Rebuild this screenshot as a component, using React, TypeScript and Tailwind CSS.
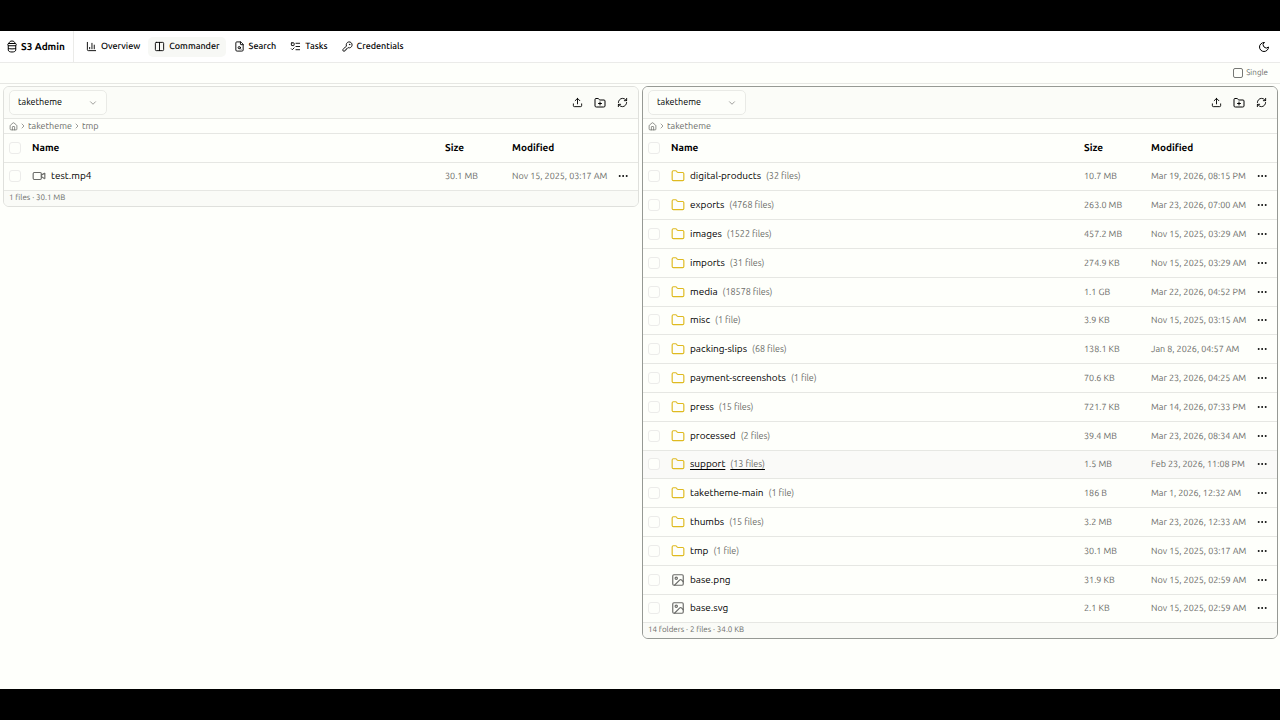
import React from "react";
import {
  ChartColumn, ChevronDown, ChevronRight, Columns2, Ellipsis, FileSearch, Folder, FolderPlus,
  House, Image, KeyRound, ListTodo, RefreshCw, Upload, Video,
} from "lucide-react";

type Kind = "folder" | "image" | "video";
type Entry = { name: string; kind: Kind; count?: string; size: string; modified: string; active?: boolean };

const left: Entry[] = [
  { name: "test.mp4", kind: "video", size: "30.1 MB", modified: "Nov 15, 2025, 03:17 AM" },
];

const right: Entry[] = [
  { name: "digital-products", kind: "folder", count: "(32 files)", size: "10.7 MB", modified: "Mar 19, 2026, 08:15 PM" },
  { name: "exports", kind: "folder", count: "(4768 files)", size: "263.0 MB", modified: "Mar 23, 2026, 07:00 AM" },
  { name: "images", kind: "folder", count: "(1522 files)", size: "457.2 MB", modified: "Nov 15, 2025, 03:29 AM" },
  { name: "imports", kind: "folder", count: "(31 files)", size: "274.9 KB", modified: "Nov 15, 2025, 03:29 AM" },
  { name: "media", kind: "folder", count: "(18578 files)", size: "1.1 GB", modified: "Mar 22, 2026, 04:52 PM" },
  { name: "misc", kind: "folder", count: "(1 file)", size: "3.9 KB", modified: "Nov 15, 2025, 03:15 AM" },
  { name: "packing-slips", kind: "folder", count: "(68 files)", size: "138.1 KB", modified: "Jan 8, 2026, 04:57 AM" },
  { name: "payment-screenshots", kind: "folder", count: "(1 file)", size: "70.6 KB", modified: "Mar 23, 2026, 04:25 AM" },
  { name: "press", kind: "folder", count: "(15 files)", size: "721.7 KB", modified: "Mar 14, 2026, 07:33 PM" },
  { name: "processed", kind: "folder", count: "(2 files)", size: "39.4 MB", modified: "Mar 23, 2026, 08:34 AM" },
  { name: "support", kind: "folder", count: "(13 files)", size: "1.5 MB", modified: "Feb 23, 2026, 11:08 PM", active: true },
  { name: "taketheme-main", kind: "folder", count: "(1 file)", size: "186 B", modified: "Mar 1, 2026, 12:32 AM" },
  { name: "thumbs", kind: "folder", count: "(15 files)", size: "3.2 MB", modified: "Mar 23, 2026, 12:33 AM" },
  { name: "tmp", kind: "folder", count: "(1 file)", size: "30.1 MB", modified: "Nov 15, 2025, 03:17 AM" },
  { name: "base.png", kind: "image", size: "31.9 KB", modified: "Nov 15, 2025, 02:59 AM" },
  { name: "base.svg", kind: "image", size: "2.1 KB", modified: "Nov 15, 2025, 02:59 AM" },
];

const nav = [
  { label: "Overview", icon: ChartColumn },
  { label: "Commander", icon: Columns2, current: true },
  { label: "Search", icon: FileSearch },
  { label: "Tasks", icon: ListTodo },
  { label: "Credentials", icon: KeyRound },
];

function KindIcon({ kind }: { kind: Kind }) {
  if (kind === "folder") return <Folder className="size-[14px] shrink-0 text-[#dfba20]" />;
  if (kind === "image") return <Image className="size-[14px] shrink-0 text-[#6b6c69]" />;
  return <Video className="size-[14px] shrink-0 text-[#6b6c69]" />;
}

function Check({ label }: { label: string }) {
  return (
    <input
      type="checkbox"
      aria-label={label}
      className="block size-3 appearance-none rounded-[3px] border border-[#ececea] bg-[#fefffb]"
    />
  );
}

function Pane({ name, path, entries, summary, focused }: {
  name: string; path: string[]; entries: Entry[]; summary: string; focused?: boolean;
}) {
  return (
    <section
      aria-label={name}
      className={
        focused
          ? "min-w-0 flex-1 overflow-hidden rounded-md border border-[#969994] bg-[#fefffb]"
          : "min-w-0 flex-1 overflow-hidden rounded-md border border-[#dfe0dc] bg-[#fefffb]"
      }
    >
      <div className="flex h-8 items-center justify-between border-b border-[#e6e7e3] bg-[#fbfcf8] pr-[10px] pl-[5px]">
        <div className="relative">
          <select
            aria-label="Bucket"
            className="block h-[25px] w-[98px] appearance-none rounded-[5px] border border-[#e9eae6] bg-[#fdfefa] pl-2 text-[9px] text-black"
          >
            <option>taketheme</option>
          </select>
          <ChevronDown className="pointer-events-none absolute top-2 right-[9px] size-[10px] text-[#8b8c89]" />
        </div>
        <div className="flex gap-[11px] text-black">
          <button aria-label="Upload"><Upload className="size-[11px]" /></button>
          <button aria-label="New folder"><FolderPlus className="size-3" /></button>
          <button aria-label="Refresh"><RefreshCw className="size-[11px]" /></button>
        </div>
      </div>
      <nav aria-label="Path" className="flex h-[15px] items-center gap-px border-b border-[#e6e7e3] pl-[5px] text-[9px] leading-[15px] text-[#6c6d69]">
        <a href="#root" aria-label="Root"><House className="size-[9px]" /></a>
        {path.map((p) => (
          <React.Fragment key={p}>
            <ChevronRight className="size-2" />
            <a href="#path">{p}</a>
          </React.Fragment>
        ))}
      </nav>
      <table className="w-full table-fixed border-collapse text-left">
        <colgroup>
          <col className="w-[23px]" />
          <col />
          <col className="w-[67px]" />
          <col className="w-[100px]" />
          <col className="w-[26px]" />
        </colgroup>
        <thead>
          <tr className="h-7 border-b border-[#e6e7e3] text-[10px] text-black">
            <th className="pl-[5px]"><Check label="Select all" /></th>
            <th className="pl-[5px] font-semibold">Name</th>
            <th className="font-semibold">Size</th>
            <th className="font-semibold">Modified</th>
            <th aria-label="Actions" />
          </tr>
        </thead>
        <tbody className="[&>tr:nth-child(5n+1)]:h-7">
          {entries.map((e) => (
            <tr
              key={e.name}
              className={
                e.active
                  ? "h-[29px] border-b border-[#e6e7e3] bg-[#fafaf8]"
                  : "h-[29px] border-b border-[#e6e7e3]"
              }
            >
              <td className="pl-[5px]"><Check label={"Select " + e.name} /></td>
              <td className="pl-[5px]">
                <button
                  className={
                    e.active
                      ? "flex items-center gap-[5px] text-[10px] leading-4 whitespace-nowrap text-black underline underline-offset-2"
                      : "flex items-center gap-[5px] text-[10px] leading-4 whitespace-nowrap text-black"
                  }
                >
                  <KindIcon kind={e.kind} />
                  <span>{e.name}</span>
                  {e.count && <span className="text-[9px] text-[#6c6d69]">{e.count}</span>}
                </button>
              </td>
              <td className="text-[9px] leading-4 whitespace-nowrap text-[#6c6d69]">{e.size}</td>
              <td className="text-[9px] leading-4 whitespace-nowrap text-[#6c6d69]">{e.modified}</td>
              <td>
                <button aria-label={"Actions for " + e.name} className="block pl-[5px]">
                  <Ellipsis className="size-3 text-black" />
                </button>
              </td>
            </tr>
          ))}
        </tbody>
      </table>
      <footer className="flex h-[15px] items-center bg-[#fafbf7] pl-[5px] text-[8px] text-[#6c6d69]">{summary}</footer>
    </section>
  );
}

function Logo() {
  return (
    <svg viewBox="0 0 20 26" fill="none" stroke="currentColor" strokeWidth="2" strokeLinecap="round" strokeLinejoin="round" className="h-[13px] w-[10px]">
      <path d="M4 7c0-3 2.500-5 6-5s6 2 6 5" />
      <rect x="1.500" y="7" width="17" height="4.500" rx="2" />
      <path d="M2.500 11.500v8.500c0 2.500 3 4 7.500 4s7.500-1.500 7.500-4v-8.500" />
      <path d="M3 17c2 1.200 12 1.200 14 0" />
    </svg>
  );
}

function MoonIcon() {
  return (
    <svg viewBox="0 0 24 24" fill="none" stroke="currentColor" strokeWidth="2" strokeLinecap="round" strokeLinejoin="round" className="size-3">
      <path d="M12 3a6 6 0 0 0 9 9 9 9 0 1 1-9-9Z" />
    </svg>
  );
}

export default function App() {
  return (
    <div className="flex min-h-screen flex-col bg-[#fefffb] font-['Ubuntu','Noto_Sans',sans-serif] text-black [text-rendering:geometricPrecision]">
      <div className="h-[31px] bg-black" />
      <header className="flex h-8 items-center border-b border-[#ebebe9] bg-white">
        <a href="#home" className="flex h-full items-center gap-1 border-r border-[#ebebe9] pr-2 pl-[7px] text-[10px] font-bold">
          <Logo />
          S3 Admin
        </a>
        <nav className="flex flex-1 items-center gap-[2px] pl-[6px] text-[9px] font-medium">
          {nav.map(({ label, icon: Icon, current }) => (
            <a
              key={label}
              href="#nav"
              className={
                current
                  ? "flex h-5 items-center gap-1 rounded-[5px] bg-[#f7f8f5] px-[6px]"
                  : "flex h-5 items-center gap-1 rounded-[5px] px-[6px]"
              }
            >
              <Icon className="size-[11px]" />
              {label}
            </a>
          ))}
        </nav>
        <button aria-label="Toggle theme" className="pr-[10px]"><MoonIcon /></button>
      </header>
      <div className="flex h-[21px] items-center justify-end border-b border-[#e6e7e3] pr-3">
        <label className="flex items-center gap-[3px] text-[8px] text-[#6c6d69]">
          <input type="checkbox" className="size-[10px] appearance-none rounded-[2px] border border-[#767774]" />
          Single
        </label>
      </div>
      <main className="flex flex-1 items-start gap-[3px] pt-[2px] pr-[2px] pl-[3px]">
        <Pane name="Left pane" path={["taketheme", "tmp"]} entries={left} summary="1 files · 30.1 MB" />
        <Pane name="Right pane" path={["taketheme"]} entries={right} summary="14 folders · 2 files · 34.0 KB" focused />
      </main>
      <div className="h-[31px] bg-black" />
    </div>
  );
}
